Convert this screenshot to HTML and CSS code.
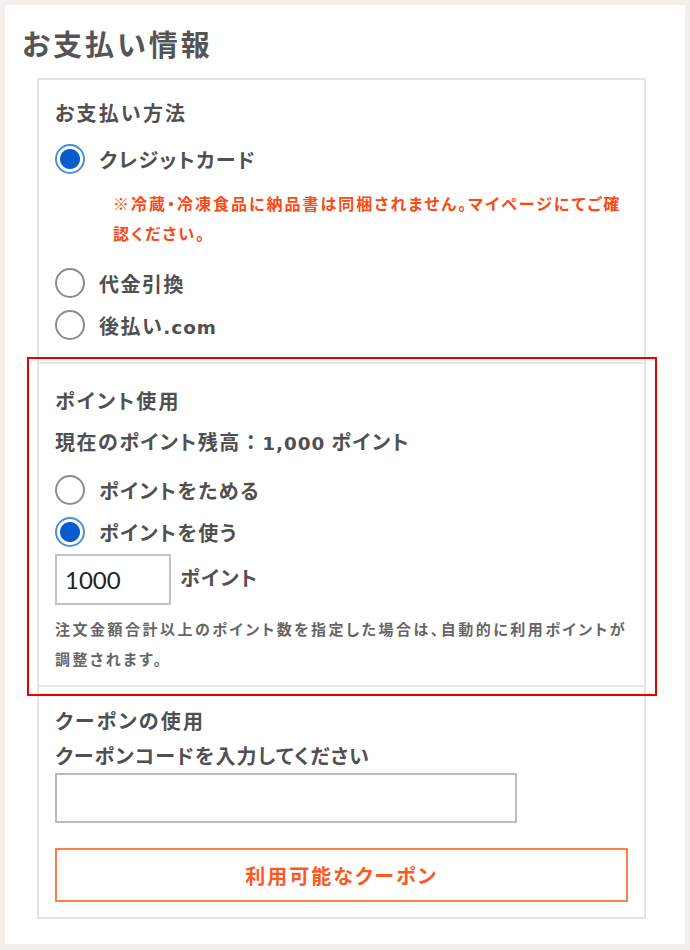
FILE: index.html
```html
<!DOCTYPE html>
<html lang="ja">
<head>
<meta charset="utf-8">
<title>お支払い情報</title>
<link rel="stylesheet" href="styles.css">
</head>
<body>
<div class="panel">
  <h1 class="title">お支払い情報</h1>
  <div class="box">
    <section class="section section-pay">
      <h2 class="heading">お支払い方法</h2>
      <label class="radio"><input type="radio" name="pay" checked><span>クレジットカード</span></label>
      <p class="warn">※冷蔵・冷凍食品に納品書は同梱されません。マイページにてご確認ください。</p>
      <label class="radio radio-cod"><input type="radio" name="pay"><span>代金引換</span></label>
      <label class="radio radio-next"><input type="radio" name="pay"><span>後払い<span class="latin">.com</span></span></label>
    </section>
    <section class="section section-point">
      <h2 class="heading">ポイント使用</h2>
      <p class="balance">現在のポイント残高<span class="colon">：</span><span class="latin">1,000</span> ポイント</p>
      <label class="radio radio-save"><input type="radio" name="pt"><span>ポイントをためる</span></label>
      <label class="radio radio-next"><input type="radio" name="pt" checked><span>ポイントを使う</span></label>
      <div class="point-row">
        <input class="point-input" type="text" value="1000">
        <span class="point-unit">ポイント</span>
      </div>
      <p class="note">注文金額合計以上のポイント数を指定した場合は、自動的に利用ポイントが調整されます。</p>
    </section>
    <section class="section section-coupon">
      <h2 class="heading">クーポンの使用</h2>
      <p class="coupon-label">クーポンコードを入力してください</p>
      <input class="coupon-input" type="text">
      <button class="coupon-btn" type="button">利用可能なクーポン</button>
    </section>
  </div>
</div>
</body>
</html>
```
FILE: styles.css
```css
* { box-sizing: border-box; }
html, body { margin: 0; padding: 0; }
body {
  background: #f3f0eb;
  padding: 5px;
  font-family: "Noto Sans CJK JP", "Noto Sans", sans-serif;
  color: #505050;
  font-feature-settings: "palt";
}
.panel {
  width: 680px;
  height: 939px;
  background: #fff;
  padding: 18px 39px 0 17px;
}
.title {
  margin: 0;
  font-size: 29px;
  line-height: 40px;
  font-weight: 700;
  letter-spacing: 3px;
  color: #555;
}
.box {
  margin: 15px 0 0 15px;
  width: 609px;
  border: 2px solid #e4e4e4;
  background: #fff;
}
.section {
  padding-left: 16px;
  padding-right: 16px;
  display: flex;
  flex-direction: column;
  align-items: flex-start;
}
.section + .section { border-top: 2px solid #e6e6e6; }
.section-pay { padding-top: 18px; padding-bottom: 22px; }
.section-point { padding-top: 22px; padding-bottom: 11px; position: relative; }
.section-point::after {
  content: "";
  position: absolute;
  left: -12px;
  right: -13px;
  top: -7px;
  bottom: -11px;
  border: 2px solid #e60000;
  pointer-events: none;
}
.section-coupon { padding-top: 19px; padding-bottom: 15px; }

.latin {
  font-family: "DejaVu Sans", "Noto Sans", sans-serif;
  font-size: 0.92em;
  letter-spacing: 1px;
}
.colon { font-feature-settings: normal; }

.heading {
  margin: 0;
  font-size: 20px;
  line-height: 30px;
  font-weight: 700;
  letter-spacing: 2.2px;
  color: #505050;
}
.radio {
  display: flex;
  align-items: center;
  gap: 14px;
  height: 30px;
  font-size: 20px;
  font-weight: 700;
  letter-spacing: 1.5px;
  color: #505050;
  margin-top: 16px;
}
.radio-cod { margin-top: 20px; }
.radio-next { margin-top: 12px; }
.radio input {
  appearance: none;
  -webkit-appearance: none;
  margin: 0;
  width: 30px;
  height: 30px;
  border-radius: 50%;
  border: 2px solid #8c8c8c;
  background: #fff;
  flex: none;
}
.radio input:checked {
  border-color: #4a8fe0;
  background: radial-gradient(circle, #0b5bd0 0 9.5px, #fff 10.5px);
}
.warn {
  margin: 14px 0 0 58px;
  font-size: 16px;
  line-height: 30px;
  font-weight: 700;
  letter-spacing: 2px;
  color: #fa4a14;
}
.balance {
  margin: 11px 0 0;
  font-size: 20px;
  line-height: 30px;
  font-weight: 700;
  letter-spacing: 1.5px;
}
.radio-save { margin-top: 16px; }
.point-row {
  display: flex;
  align-items: flex-start;
  gap: 9px;
  margin-top: 7px;
}
.point-input {
  width: 116px;
  height: 51px;
  border: 2px solid #c2c2c2;
  padding: 0 8px;
  font-family: "Lato", "Noto Sans", sans-serif;
  font-size: 24px;
  color: #222;
  background: #fff;
}
.point-unit {
  margin-top: 9px;
  font-size: 20px;
  line-height: 30px;
  font-weight: 700;
  letter-spacing: 1.5px;
}
.note {
  margin: 9px 0 0;
  font-size: 15px;
  line-height: 30px;
  font-weight: 700;
  letter-spacing: 2.5px;
  color: #666;
}
.coupon-label {
  margin: 5px 0 0;
  font-size: 20px;
  line-height: 30px;
  font-weight: 700;
  letter-spacing: 1.2px;
}
.coupon-input {
  margin-top: 2px;
  width: 462px;
  height: 50px;
  border: 2px solid #bcbcbc;
  background: #fff;
}
.coupon-btn {
  margin-top: 25px;
  width: 573px;
  height: 54px;
  border: 2px solid #ff7d4d;
  background: #fff;
  color: #fa5a1e;
  font-family: inherit;
  font-size: 20px;
  font-weight: 700;
  letter-spacing: 2px;
  font-feature-settings: "palt";
}
```
